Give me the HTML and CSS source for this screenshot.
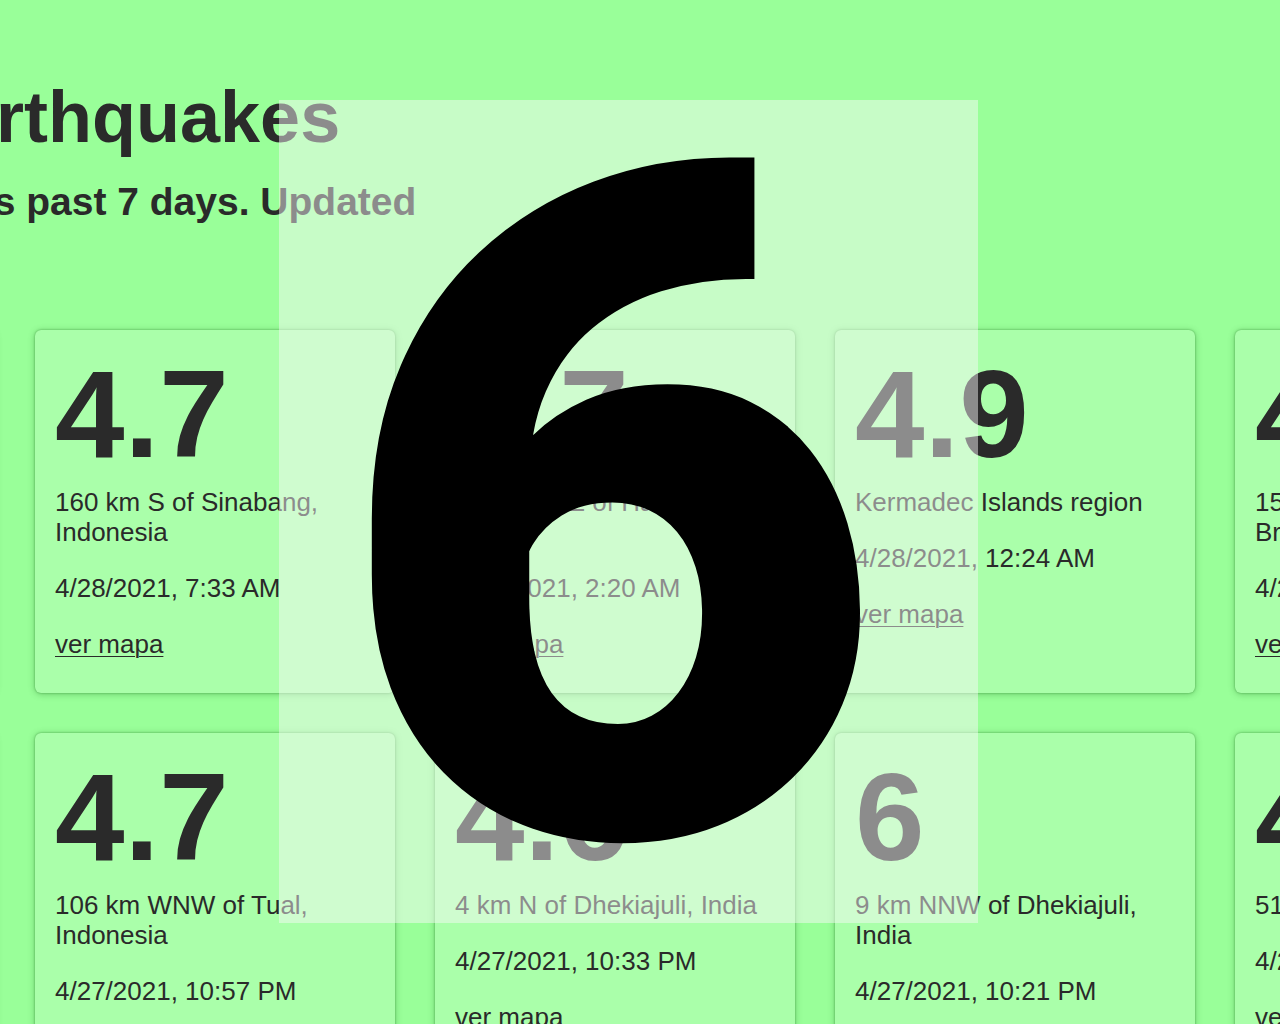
FILE: index.html
```html
<!DOCTYPE html>
<html lang="en">
<head>
<meta charset="utf-8">
<title>Earthquakes</title>
<link rel="stylesheet" href="styles.css">
</head>
<body>
<div class="page">
  <header class="head">
    <h1 class="title">Earthquakes</h1>
    <p class="subtitle">Magnitude 4.5+ earthquakes past 7 days. Updated</p>
  </header>
  <main class="grid">
    <article class="card">
      <h2 class="mag">4.6</h2>
      <p class="place">South of the Fiji Islands</p>
      <p class="time">4/28/2021, 8:12 AM</p>
      <p class="more"><a class="link" href="#">ver mapa</a></p>
    </article>
    <article class="card">
      <h2 class="mag">4.7</h2>
      <p class="place">160 km S of Sinabang, Indonesia</p>
      <p class="time">4/28/2021, 7:33 AM</p>
      <p class="more"><a class="link" href="#">ver mapa</a></p>
    </article>
    <article class="card">
      <h2 class="mag">4.7</h2>
      <p class="place">87 km SSE of Hachijo-jima, Japan</p>
      <p class="time">4/28/2021, 2:20 AM</p>
      <p class="more"><a class="link" href="#">ver mapa</a></p>
    </article>
    <article class="card">
      <h2 class="mag">4.9</h2>
      <p class="place">Kermadec Islands region</p>
      <p class="time">4/28/2021, 12:24 AM</p>
      <p class="more"><a class="link" href="#">ver mapa</a></p>
    </article>
    <article class="card">
      <h2 class="mag">4.5</h2>
      <p class="place">154 km ESE of Lagoa, Brazil</p>
      <p class="time">4/27/2021, 11:48 PM</p>
      <p class="more"><a class="link" href="#">ver mapa</a></p>
    </article>
    <article class="card">
      <h2 class="mag">4.5</h2>
      <p class="place">Mid-Atlantic Ridge</p>
      <p class="time">4/27/2021, 11:02 PM</p>
      <p class="more"><a class="link" href="#">ver mapa</a></p>
    </article>
    <article class="card">
      <h2 class="mag">4.7</h2>
      <p class="place">106 km WNW of Tual, Indonesia</p>
      <p class="time">4/27/2021, 10:57 PM</p>
      <p class="more"><a class="link" href="#">ver mapa</a></p>
    </article>
    <article class="card">
      <h2 class="mag">4.6</h2>
      <p class="place">4 km N of Dhekiajuli, India</p>
      <p class="time">4/27/2021, 10:33 PM</p>
      <p class="more"><a class="link" href="#">ver mapa</a></p>
    </article>
    <article class="card">
      <h2 class="mag">6</h2>
      <p class="place">9 km NNW of Dhekiajuli, India</p>
      <p class="time">4/27/2021, 10:21 PM</p>
      <p class="more"><a class="link" href="#">ver mapa</a></p>
    </article>
    <article class="card">
      <h2 class="mag">4.8</h2>
      <p class="place">51 km E of Hihifo, Tonga</p>
      <p class="time">4/27/2021, 10:08 PM</p>
      <p class="more"><a class="link" href="#">ver mapa</a></p>
    </article>
  </main>
</div>
<div class="countdown"><span class="countdown-num">6</span></div>
</body>
</html>
```
FILE: styles.css
```css
html, body {
  margin: 0;
  padding: 0;
  background: #99ff99;
  overflow: hidden;
  height: 1024px;
}

body {
  font-family: "Liberation Sans", Arial, sans-serif;
  color: #2a2a2a;
}

.page {
  margin-left: -365px;
  padding-top: 77px;
}

.head {
  display: flex;
  flex-direction: column;
  align-items: flex-start;
}

.title {
  margin: 0 0 0 273px;
  font-size: 72px;
  line-height: 80px;
  font-weight: 700;
  white-space: nowrap;
}

.subtitle {
  margin: 22px 0 0 -143px;
  font-size: 39px;
  line-height: 45px;
  font-weight: 700;
  white-space: nowrap;
}

.grid {
  margin-top: 106px;
  display: grid;
  grid-template-columns: repeat(5, 360px);
  column-gap: 40px;
  row-gap: 40px;
}

.card {
  background: #aaffaa;
  border-radius: 6px;
  box-shadow: 0 0 2px rgba(0, 80, 0, 0.45), 0 1px 7px rgba(0, 80, 0, 0.3);
  padding: 21px 20px 8px;
  font-size: 26px;
  line-height: 30px;
}

.mag {
  margin: 0 0 11px;
  font-size: 125px;
  line-height: 125px;
  font-weight: 700;
}

.place,
.time,
.more {
  margin: 0 0 26px;
}

.link {
  color: #2a2a2a;
  text-decoration: underline;
  text-decoration-thickness: 1px;
  text-underline-offset: 3px;
}

.countdown {
  position: fixed;
  left: 279px;
  top: 100px;
  width: 699px;
  height: 823px;
  box-sizing: border-box;
  padding: 4px 37px 0 0;
  background: rgba(248, 248, 248, 0.48);
  display: flex;
  align-items: center;
  justify-content: center;
  overflow: hidden;
}

.countdown-num {
  font-family: Roboto, "Liberation Sans", sans-serif;
  font-weight: 900;
  font-size: 938px;
  line-height: 938px;
  color: #000;
  transform: scaleX(1.02);
}
```
